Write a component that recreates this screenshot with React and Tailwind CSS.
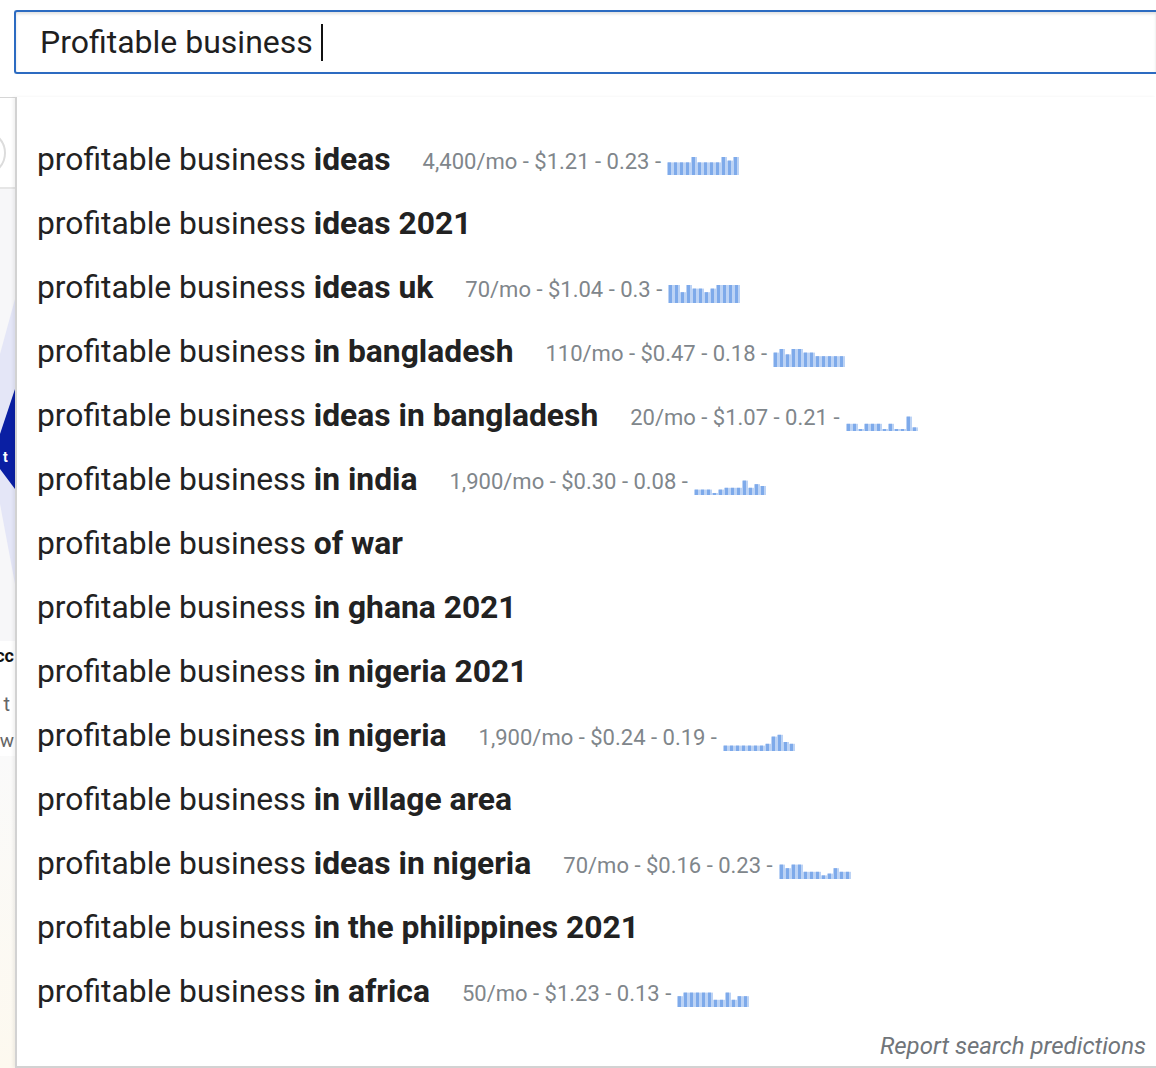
import React from "react";

const rows = [
  { b: "ideas", s: "4,400/mo - $1.21 - 0.23 -", bars: [7, 7, 7, 7, 10, 7, 7, 7, 7, 10, 8, 10] },
  { b: "ideas 2021" },
  { b: "ideas uk", s: "70/mo - $1.04 - 0.3 -", bars: [10, 10, 6, 10, 8, 8, 6, 8, 10, 10, 10, 10] },
  { b: "in bangladesh", s: "110/mo - $0.47 - 0.18 -", bars: [8, 10, 7, 10, 10, 8, 8, 6, 6, 6, 6, 6] },
  { b: "ideas in bangladesh", s: "20/mo - $1.07 - 0.21 -", bars: [4, 4, 1, 4, 4, 4, 1, 4, 1, 1, 8, 2] },
  { b: "in india", s: "1,900/mo - $0.30 - 0.08 -", bars: [3, 3, 3, 1, 3, 4, 4, 4, 8, 4, 6, 5] },
  { b: "of war" },
  { b: "in ghana 2021" },
  { b: "in nigeria 2021" },
  { b: "in nigeria", s: "1,900/mo - $0.24 - 0.19 -", bars: [3, 3, 3, 3, 3, 3, 3, 4, 8, 9, 5, 4] },
  { b: "in village area" },
  { b: "ideas in nigeria", s: "70/mo - $0.16 - 0.23 -", bars: [8, 6, 8, 8, 4, 4, 4, 2, 3, 6, 4, 4] },
  { b: "in the philippines 2021" },
  { b: "in africa", s: "50/mo - $1.23 - 0.13 -", bars: [6, 8, 8, 8, 8, 8, 4, 4, 8, 4, 6, 6] },
];

function Spark({ bars }) {
  return (
    <svg width="72" height="20" viewBox="0 0 72 20" className="ml-[6px] shrink-0 self-end mb-[1px]">
      {bars.map((h, i) => {
        const hh = Math.max(2, (h / 10) * 18);
        return (
          <g key={i}>
            <rect x={i * 6} y={20 - hh} width="6" height={hh} fill="#bcd3f5" />
            <rect x={i * 6 + 1} y={20 - hh} width="3" height={hh} fill="#7eaaea" />
          </g>
        );
      })}
    </svg>
  );
}

function ClipText({ children, className }) {
  return (
    <div className="flex justify-end overflow-hidden w-[14px]">
      <span className={"whitespace-nowrap shrink-0 " + className}>{children}</span>
    </div>
  );
}

export default function App() {
  return (
    <div className="w-[1156px] h-[1068px] bg-white overflow-hidden font-['Roboto',sans-serif]">
      <div className="pt-[10px] pl-[14px]">
        <div className="h-[64px] border-2 border-r-0 border-[#2c6bc1] rounded-l-[3px] shadow-[inset_0_2px_3px_rgba(0,0,0,0.12)] flex items-center pl-[24px]">
          <span className="text-[32px] text-[#1f1f1f] leading-none">Profitable business</span>
          <span className="ml-[8px] w-[2px] h-[37px] bg-[#111]" />
        </div>
      </div>

      <div className="mt-[23px] flex h-[971px]">
        <div className="w-[15px] shrink-0 flex flex-col border-t border-[#d6d6d6] bg-white">
          <div className="h-[89px] relative overflow-hidden">
            <div className="absolute left-[-40px] top-[32px] w-[46px] h-[46px] rounded-full border-2 border-[#dcdcdc]" />
          </div>
          <div className="h-[2px] bg-[#e6e6e6]" />
          <div className="flex-1 bg-[#f7f7f9] flex flex-col">
            <svg width="15" height="380" viewBox="0 0 15 380" className="mt-[15px] shrink-0">
              <polygon points="0,150 15,95 15,380 0,300" fill="#e4e6f7" />
              <polygon points="0,230 15,185 15,285 0,265" fill="#0a1fa3" />
              <text x="3" y="258" fill="#fff" fontSize="14" fontWeight="bold" fontFamily="Roboto">t</text>
            </svg>
            <div className="mt-[57px] bg-white flex flex-col">
              <ClipText className="text-[18px] font-bold text-[#111] leading-[30px]">Succ</ClipText>
              <ClipText className="mt-[18px] pr-[4px] text-[20px] text-[#666] leading-[30px]">t</ClipText>
              <ClipText className="mt-[7px] text-[19px] text-[#666] leading-[30px]">new</ClipText>
            </div>
            <div className="flex-1 bg-gradient-to-b from-[#fafafa] to-[#fdf9ef]" />
          </div>
        </div>

        <div className="flex-1 flex flex-col bg-white border-l-2 border-b-2 border-[#d2d2d2] shadow-[-2px_0_3px_rgba(0,0,0,0.06)]">
          <div className="pt-[30px] pl-[20px] flex flex-col">
            {rows.map((r, i) => (
              <div key={i} className="h-[64px] flex items-center">
                <span className="text-[31.8px] leading-[40px] text-[#222] whitespace-nowrap">
                  profitable business <span className="font-bold">{r.b}</span>
                </span>
                {r.s && (
                  <span className="ml-[32px] mt-[6px] flex items-center">
                    <span className="text-[22px] text-[#80868b] whitespace-nowrap leading-[28px]">{r.s}</span>
                    <Spark bars={r.bars} />
                  </span>
                )}
              </div>
            ))}
          </div>
          <div className="flex-1 flex items-center justify-end pr-[10px] pt-[2px]">
            <span className="text-[24px] italic text-[#70757a]">Report search predictions</span>
          </div>
        </div>
      </div>
    </div>
  );
}
